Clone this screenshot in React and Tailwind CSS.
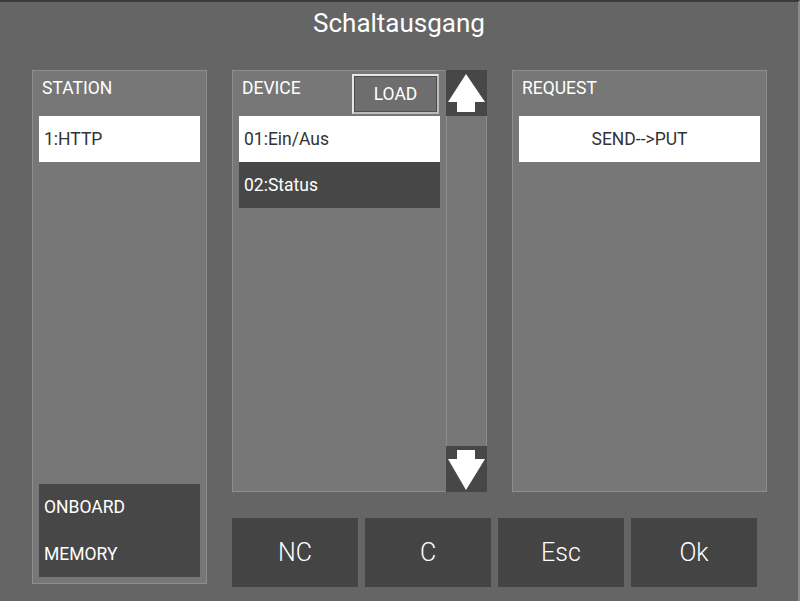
const font = { fontFamily: 'Roboto, "Liberation Sans", sans-serif' }

function UpArrow() {
  return (
    <svg width="41" height="46" viewBox="0 0 41 46" className="block">
      <polygon points="20,4 2,32 11,32 11,42 29,42 29,32 39,32" fill="#fff" />
    </svg>
  )
}

function DownArrow() {
  return (
    <svg width="41" height="46" viewBox="0 0 41 46" className="block">
      <polygon points="11,4 29,4 29,13 39,13 20,44 2,13 11,13" fill="#fff" />
    </svg>
  )
}

function PanelTitle({ children }) {
  return (
    <div className="h-[45px] pl-[9px] pt-[7px] text-[17.5px] leading-[20px] text-white">
      {children}
    </div>
  )
}

function ListItem({ label, active, center }) {
  return (
    <div
      className={
        'flex h-[46px] items-center text-[17.5px] ' +
        (center ? 'justify-center ' : 'pl-[5px] ') +
        (active ? 'bg-white text-[#333]' : 'bg-[#474747] text-white')
      }
    >
      {label}
    </div>
  )
}

function ActionButton({ label }) {
  return (
    <button className="flex h-[69px] w-[126px] items-center justify-center bg-[#444] text-[25px] font-light text-white">
      {label}
    </button>
  )
}

export default function App() {
  return (
    <div
      className="h-[601px] w-[800px] overflow-hidden border-t-2 border-r-2 border-t-[#3a3a3a] border-r-[#8a8a8a] bg-[#656565]"
      style={font}
    >
      <div className="h-[68px] pt-[6px] text-center text-[26px] leading-[30px] text-white">
        Schaltausgang
      </div>

      <div className="flex pl-[32px]">
        {/* station */}
        <div className="flex h-[514px] w-[175px] flex-col border border-[#8e8e8e] bg-[#777] px-[6px] pb-[6px]">
          <div className="-mx-[6px]">
            <PanelTitle>STATION</PanelTitle>
          </div>
          <ListItem label="1:HTTP" active />
          <div className="mt-auto flex h-[93px] flex-col justify-around bg-[#474747] pl-[5px] text-[17.5px] text-white">
            <span>ONBOARD</span>
            <span>MEMORY</span>
          </div>
        </div>

        <div className="ml-[25px] flex flex-col">
          <div className="flex h-[422px]">
            {/* device */}
            <div className="relative w-[214px] border border-r-0 border-[#8e8e8e] bg-[#777] px-[6px]">
              <div className="-mx-[6px]">
                <PanelTitle>DEVICE</PanelTitle>
              </div>
              <button className="absolute left-[119px] top-[3px] h-[40px] w-[87px] border-2 border-t-[#e6e6e6] border-l-[#e6e6e6] border-b-[#bcbcbc] border-r-[#bcbcbc] bg-[#6e6e6e] text-[17.5px] text-white shadow-[inset_0_0_0_1px_#4e4e4e]">
                LOAD
              </button>
              <ListItem label="01:Ein/Aus" active />
              <ListItem label="02:Status" />
            </div>

            {/* scrollbar */}
            <div className="flex w-[41px] flex-col border-x border-[#8e8e8e] bg-[#777]">
              <div className="-mx-px bg-[#474747]">
                <UpArrow />
              </div>
              <div className="flex-1" />
              <div className="-mx-px bg-[#474747]">
                <DownArrow />
              </div>
            </div>

            {/* request */}
            <div className="ml-[25px] w-[255px] border border-[#8e8e8e] bg-[#777] px-[6px]">
              <div className="-mx-[6px]">
                <PanelTitle>REQUEST</PanelTitle>
              </div>
              <ListItem label="SEND-->PUT" active center />
            </div>
          </div>

          <div className="mt-[26px] flex gap-[7px]">
            <ActionButton label="NC" />
            <ActionButton label="C" />
            <ActionButton label="Esc" />
            <ActionButton label="Ok" />
          </div>
        </div>
      </div>
    </div>
  )
}
